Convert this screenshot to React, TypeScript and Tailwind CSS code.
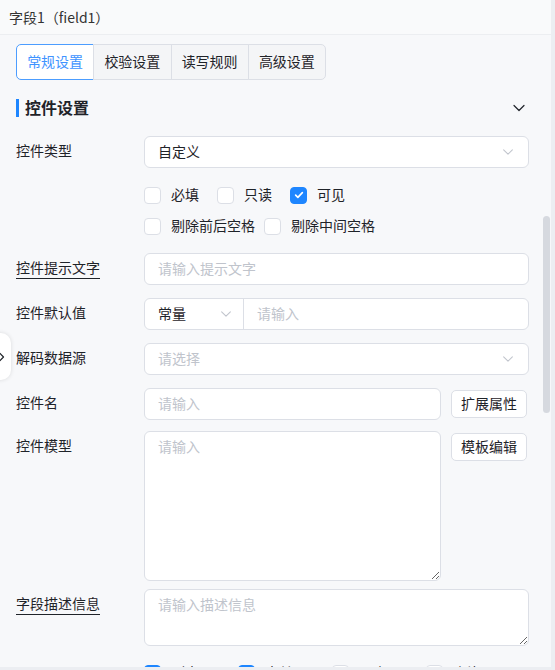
import React from "react";

const ChevronDown = ({ className = "" }: { className?: string }) => (
  <svg viewBox="0 0 16 16" className={className} fill="none" stroke="currentColor" strokeWidth="1.2">
    <path d="M3 5.5l5 5 5-5" strokeLinecap="round" strokeLinejoin="round" />
  </svg>
);

const Check = () => (
  <svg viewBox="0 0 16 16" className="h-[12px] w-[12px]" fill="none" stroke="white" strokeWidth="2.2">
    <path d="M3.5 8.2l3 3 6-6.4" strokeLinecap="round" strokeLinejoin="round" />
  </svg>
);

const Box = ({ checked }: { checked?: boolean }) => (
  <span
    className={`flex h-[17px] w-[17px] shrink-0 items-center justify-center rounded-[4px] border ${
      checked ? "border-[#1e86ff] bg-[#1e86ff]" : "border-[#dcdfe6] bg-white"
    }`}
  >
    {checked ? <Check /> : null}
  </span>
);

const CheckItem = ({ label, checked }: { label: string; checked?: boolean }) => (
  <label className="flex items-center gap-[10px] text-sm text-[#1f2329]">
    <Box checked={checked} />
    <span className="-mt-[3px]">{label}</span>
  </label>
);

const Label = ({ text, underline }: { text: string; underline?: boolean }) => (
  <div
    className={`w-32 shrink-0 text-sm leading-7 text-[#1f2329] ${
      underline ? "underline decoration-[#1f2329] underline-offset-[5px]" : ""
    }`}
  >
    <span>{text}</span>
  </div>
);

const inputCls =
  "h-8 w-full rounded-md border border-[#dcdfe6] bg-white px-[13px] pb-[3px] text-sm text-[#1f2329] outline-none placeholder:text-[#c0c4cc]";

const btnCls =
  "ml-[10px] mr-[2px] mt-[2px] h-[28px] w-[76px] shrink-0 rounded-[5px] border border-[#dcdfe6] bg-white pb-[2px] text-sm text-[#1f2329]";

const TABS = ["常规设置", "校验设置", "读写规则", "高级设置"];

export default function App() {
  return (
    <div
      className="relative box-border h-[670px] w-[555px] overflow-hidden border-r-4 border-b-[3px] border-[#eceef2] bg-[#f7f8fa]"
      style={{ fontFamily: '"Noto Sans CJK SC", "Noto Sans", sans-serif' }}
    >
      {/* panel title */}
      <div className="box-border flex h-[35px] items-center border-b border-[#eceef1] bg-[#f9fafb] px-[9px] text-sm text-[#333]">
        字段1（field1）
      </div>

      <div className="pl-4 pr-[22px]">
        {/* tabs */}
        <div className="mt-[9px] flex h-[36px] w-[310px] rounded-[5px]">
          {TABS.map((tab, i) => (
            <div
              key={tab}
              className={`flex flex-1 items-center justify-center border pb-[2px] text-sm ${
                i === 0
                  ? "rounded-l-[5px] border-[#4c9dff] bg-white text-[#3e93ff]"
                  : "-ml-px border-[#dcdfe6] bg-[#f4f5f7] text-[#1f2329]"
              } ${i === TABS.length - 1 ? "rounded-r-[5px]" : ""}`}
            >
              {tab}
            </div>
          ))}
        </div>

        {/* section head */}
        <div className="mt-[16px] flex h-6 items-center justify-between">
          <div className="flex items-center gap-[6px]">
            <span className="h-[18px] w-[3px] bg-[#1e86ff]" />
            <span className="-mt-[2px] text-base font-bold text-[#1f2329]">控件设置</span>
          </div>
          <ChevronDown className="mr-[2px] h-[16px] w-[16px] text-[#1f2329]" />
        </div>

        {/* 控件类型 */}
        <div className="mt-[16px] flex items-start">
          <Label text="控件类型" />
          <div className="relative flex h-8 flex-1 items-center rounded-md border border-[#dcdfe6] bg-white px-[13px] text-sm text-[#1f2329]">
            <span className="-mt-[3px] flex-1">自定义</span>
            <ChevronDown className="h-[14px] w-[14px] text-[#c0c4cc]" />
          </div>
        </div>

        <div className="ml-32 mt-[18px] flex h-[18px] items-center gap-[18px]">
          <CheckItem label="必填" />
          <CheckItem label="只读" />
          <CheckItem label="可见" checked />
        </div>
        <div className="ml-32 mt-[13px] flex h-[18px] items-center gap-[9px]">
          <CheckItem label="剔除前后空格" />
          <CheckItem label="剔除中间空格" />
        </div>

        {/* 控件提示文字 */}
        <div className="mt-[18px] flex items-start">
          <Label text="控件提示文字" underline />
          <input className={inputCls} placeholder="请输入提示文字" />
        </div>

        {/* 控件默认值 */}
        <div className="mt-[13px] flex items-start">
          <Label text="控件默认值" />
          <div className="flex h-8 flex-1 overflow-hidden rounded-md border border-[#dcdfe6] bg-white text-sm">
            <div className="flex w-[99px] shrink-0 items-center border-r border-[#dcdfe6] pl-[13px] pr-[10px] text-[#1f2329]">
              <span className="-mt-[3px] flex-1">常量</span>
              <ChevronDown className="h-[14px] w-[14px] text-[#c0c4cc]" />
            </div>
            <input
              className="w-full px-[13px] pb-[3px] text-sm text-[#1f2329] outline-none placeholder:text-[#c0c4cc]"
              placeholder="请输入"
            />
          </div>
        </div>

        {/* 解码数据源 */}
        <div className="mt-[13px] flex items-start">
          <Label text="解码数据源" />
          <div className="flex h-8 flex-1 items-center rounded-md border border-[#dcdfe6] bg-white px-[13px] text-sm text-[#c0c4cc]">
            <span className="-mt-[3px] flex-1">请选择</span>
            <ChevronDown className="h-[14px] w-[14px] text-[#c0c4cc]" />
          </div>
        </div>

        {/* 控件名 */}
        <div className="mt-[13px] flex items-start">
          <Label text="控件名" />
          <input className={`${inputCls} flex-1`} placeholder="请输入" />
          <button className={btnCls}>扩展属性</button>
        </div>

        {/* 控件模型 */}
        <div className="mt-[11px] flex items-start">
          <Label text="控件模型" />
          <textarea
            className="h-[150px] w-full flex-1 resize-y rounded-md border border-[#dcdfe6] bg-white px-[13px] py-[4px] text-sm text-[#1f2329] outline-none placeholder:text-[#c0c4cc]"
            placeholder="请输入"
          />
          <button className={btnCls}>模板编辑</button>
        </div>

        {/* 字段描述信息 */}
        <div className="mt-[8px] flex items-start">
          <Label text="字段描述信息" underline />
          <textarea
            className="h-[57px] w-full resize-y rounded-md border border-[#dcdfe6] bg-white px-[13px] py-[4px] text-sm text-[#1f2329] outline-none placeholder:text-[#c0c4cc]"
            placeholder="请输入描述信息"
          />
        </div>

        <div className="ml-32 mt-[18px] flex h-[18px] items-center gap-[11px]">
          <CheckItem label="列表显示" checked />
          <CheckItem label="表单显示" checked />
          <CheckItem label="导出显示" />
          <CheckItem label="查询显示" />
        </div>
      </div>

      {/* scrollbar thumb */}
      <div className="absolute right-[1px] top-[216px] h-[197px] w-[7px] rounded-full bg-[#d6d9df]" />

      {/* collapse handle */}
      <div className="absolute left-[-14px] top-[333px] flex h-[47px] w-[25px] items-center rounded-r-[10px] bg-white shadow-[0_0_4px_rgba(0,0,0,0.12)]">
        <svg viewBox="0 0 10 10" className="ml-[11px] h-[10px] w-[10px]" fill="none" stroke="#1f2329" strokeWidth="1.2">
          <path d="M3 1.5l3.5 3.5L3 8.5" strokeLinecap="round" strokeLinejoin="round" />
        </svg>
      </div>
    </div>
  );
}
